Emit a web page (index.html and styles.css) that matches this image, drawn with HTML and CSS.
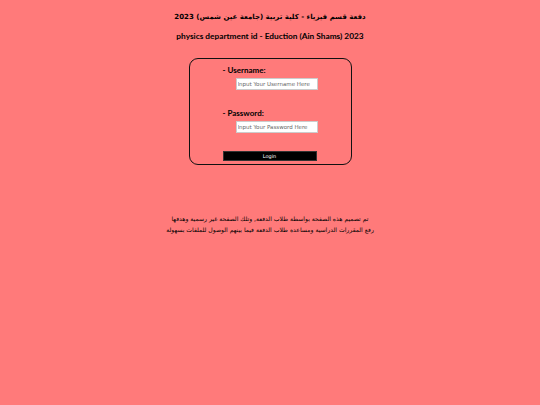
FILE: index.html
```html
<!DOCTYPE html>
<html>
<head>
<meta charset="utf-8">
<link rel="stylesheet" href="styles.css">
</head>
<body>
<div class="page">
  <h1 class="title title-ar" dir="rtl">دفعة قسم فيزياء - كلية تربية (جامعة عين شمس) 2023</h1>
  <h2 class="title title-en">physics department id - Eduction (Ain Shams) 2023</h2>
  <form class="box">
    <label class="label">- Username:</label>
    <input class="field" type="text" placeholder="Input Your Username Here">
    <label class="label label2">- Password:</label>
    <input class="field" type="password" placeholder="Input Your Password Here">
    <button class="btn" type="button">Login</button>
  </form>
  <div class="note" dir="rtl">
    <p>تم تصميم هذه الصفحة بواسطة طلاب الدفعة, وتلك الصفحة غير رسمية وهدفها</p>
    <p>رفع المقررات الدراسية ومساعدة طلاب الدفعة فيما بينهم الوصول للملفات بسهولة</p>
  </div>
</div>
</body>
</html>
```
FILE: styles.css
```css
html, body {
  margin: 0;
  padding: 0;
  background: #ff7a7a;
  font-family: Lato, "DejaVu Sans", sans-serif;
  color: #000;
}
.page {
  display: flex;
  flex-direction: column;
  align-items: center;
  padding-top: 10px;
}
.title {
  margin: 0;
  font-weight: bold;
  line-height: 14px;
}
.title-ar {
  font-family: "DejaVu Sans", sans-serif;
  font-size: 7px;
  margin-bottom: 5px;
}
.title-en {
  font-size: 8.3px;
}
.box {
  margin-top: 15px;
  width: 161px;
  height: 105px;
  border: 1.5px solid #111;
  border-radius: 9px;
  display: flex;
  flex-direction: column;
  padding: 0;
}
.label {
  font-size: 8px;
  font-weight: bold;
  margin: 6px 0 0 33px;
  line-height: 11px;
}
.label2 { margin-top: 18px; }
.field {
  margin: 2px 0 0 46px;
  width: 82px;
  height: 12px;
  box-sizing: border-box;
  border: 1px solid #ccc;
  background: #fff;
  padding: 0 1px;
  font-family: "DejaVu Sans", sans-serif;
  font-size: 5.5px;
  outline: none;
}
.field::placeholder { color: #666; }
.btn {
  margin: 18px 0 0 33px;
  width: 94px;
  height: 10px;
  background: #000;
  color: #fff;
  border: 1px solid #333;
  font-family: "DejaVu Sans", sans-serif;
  font-size: 5px;
  padding: 0;
  line-height: 8px;
}
.note {
  margin-top: 48px;
  text-align: center;
  font-family: "DejaVu Sans", sans-serif;
}
.note p {
  margin: 0;
  font-size: 6.1px;
  line-height: 11px;
}
```
